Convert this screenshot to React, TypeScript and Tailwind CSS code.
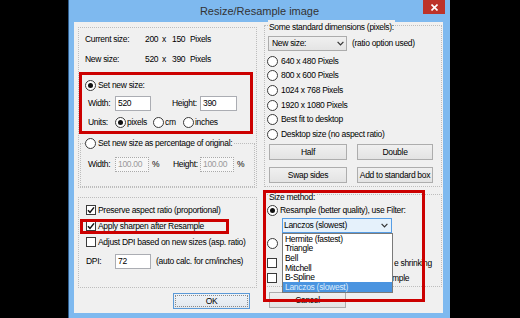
import React from "react";

function Radio({ checked = false }: { checked?: boolean }) {
  return (
    <span className="flex h-[11px] w-[11px] shrink-0 items-center justify-center rounded-full border border-[#3a3a3a] bg-white">
      {checked && <span className="h-[5px] w-[5px] rounded-full bg-[#111]" />}
    </span>
  );
}

function Check({ checked = false }: { checked?: boolean }) {
  return (
    <span className="flex h-[10px] w-[10px] shrink-0 items-center justify-center border border-[#3a3a3a] bg-white">
      {checked && (
        <svg width="8" height="8" viewBox="0 0 8 8">
          <path d="M1 4.2 L3 6.4 L7 1.4" stroke="#111" strokeWidth="1.5" fill="none" />
        </svg>
      )}
    </span>
  );
}

function Chevron() {
  return (
    <svg width="7" height="5" viewBox="0 0 7 5">
      <path d="M0.6 0.8 L3.5 3.8 L6.4 0.8" stroke="#333" strokeWidth="1.2" fill="none" />
    </svg>
  );
}

function Edit({ w, value, disabled = false }: { w: string; value: string; disabled?: boolean }) {
  return (
    <span
      className={
        disabled
          ? `${w} flex h-[15px] items-center border border-dotted border-[#a9a9a9] bg-[#f6f6f6] pl-[2px] text-[#9a9a9a]`
          : `${w} flex h-[15px] items-center border border-[#abadb3] bg-white pl-[2px]`
      }
    >
      {value}
    </span>
  );
}

function Button({ w, label, focused = false }: { w: string; label: string; focused?: boolean }) {
  return (
    <div
      className={
        focused
          ? `${w} flex h-[16px] items-center justify-center border border-[#5b9ad8] bg-gradient-to-b from-[#eef3f8] to-[#e3e8ee] p-[1px]`
          : `${w} flex h-[16px] items-center justify-center border border-[#adadad] bg-gradient-to-b from-[#f0f0f0] to-[#e3e3e3]`
      }
    >
      {focused ? (
        <span className="flex h-full w-full items-center justify-center border border-dotted border-[#8a8a8a]">{label}</span>
      ) : (
        label
      )}
    </div>
  );
}

const filters = ["Hermite (fastest)", "Triangle", "Bell", "Mitchell", "B-Spline", "Lanczos (slowest)"];

export default function App() {
  return (
    <div className="h-[318px] w-[520px] overflow-hidden bg-black font-['Liberation_Sans',Arial,sans-serif] text-[8.5px] leading-none tracking-[-0.3px] text-black">
      <div className="ml-[68px] flex h-[318px] w-[382px] flex-col border-l border-[#2f5c8c] bg-[#7eb9ef]">
        {/* title bar */}
        <div className="relative flex h-[22px] items-center justify-center">
          <span className="text-[11px] tracking-normal text-[#333]">Resize/Resample image</span>
          <div className="absolute right-[5px] top-0 flex h-[14px] w-[22px] items-center justify-center bg-[#bd3329]">
            <svg width="7" height="7" viewBox="0 0 7 7">
              <path d="M0.5 0.5 L6.5 6.5 M6.5 0.5 L0.5 6.5" stroke="#fff" strokeWidth="1.6" />
            </svg>
          </div>
        </div>

        {/* client */}
        <div className="relative ml-[5px] flex h-[291px] w-[369px] bg-[#f0f0f0]">
          {/* left column */}
          <div className="ml-[4px] flex w-[179px] flex-col">
            <div className="mt-[5px] flex h-[161px] flex-col border border-dotted border-[#bdbdbd]">
              <div className="mt-[4px] flex h-[14px] items-center pl-[6px]">
                <span className="w-[60px]">Current size:</span>
                <span className="w-[17px]">200</span>
                <span className="w-[10px]">x</span>
                <span className="w-[18px]">150</span>
                <span>Pixels</span>
              </div>
              <div className="mt-[6px] flex h-[14px] items-center pl-[6px]">
                <span className="w-[60px]">New size:</span>
                <span className="w-[17px]">520</span>
                <span className="w-[10px]">x</span>
                <span className="w-[18px]">390</span>
                <span>Pixels</span>
              </div>
              <div className="mt-[12px] flex h-[14px] items-center pl-[6px]">
                <Radio checked />
                <span className="ml-[2px]">Set new size:</span>
              </div>
              <div className="mt-[4px] flex h-[15px] items-center pl-[9px]">
                <span className="w-[27px]">Width:</span>
                <Edit w="w-[36px]" value="520" />
                <span className="ml-[21px] w-[28px]">Height:</span>
                <Edit w="w-[37px]" value="390" />
              </div>
              <div className="mt-[4px] flex h-[14px] items-center pl-[9px]">
                <span className="w-[27px]">Units:</span>
                <span className="flex w-[38px] items-center">
                  <Radio checked />
                  <span className="ml-[1px]">pixels</span>
                </span>
                <span className="flex w-[30px] items-center">
                  <Radio />
                  <span className="ml-[1px]">cm</span>
                </span>
                <span className="flex items-center">
                  <Radio />
                  <span className="ml-[1px]">inches</span>
                </span>
              </div>
              <div className="mx-[1px] mt-[14px] flex h-[44px] flex-col border border-dotted border-[#bdbdbd]">
                <div className="-mt-[8px] ml-[4px] flex h-[14px] items-center self-start bg-[#f0f0f0] pr-[2px]">
                  <Radio />
                  <span className="ml-[2px]">Set new size as percentage of original:</span>
                </div>
                <div className="mt-[7px] flex h-[15px] items-center pl-[7px]">
                  <span className="w-[27px]">Width:</span>
                  <Edit w="w-[34px]" value="100.00" disabled />
                  <span className="ml-[3px] w-[21px]">%</span>
                  <span className="w-[27px]">Height:</span>
                  <Edit w="w-[34px]" value="100.00" disabled />
                  <span className="ml-[3px]">%</span>
                </div>
              </div>
            </div>

            <div className="mt-[9px] flex h-[91px] flex-col border border-dotted border-[#bdbdbd]">
              <div className="mt-[5px] flex h-[14px] items-center pl-[7px]">
                <Check checked />
                <span className="ml-[2px]">Preserve aspect ratio (proportional)</span>
              </div>
              <div className="mt-[2px] flex h-[14px] items-center pl-[7px]">
                <Check checked />
                <span className="ml-[2px]">Apply sharpen after Resample</span>
              </div>
              <div className="mt-[2px] flex h-[14px] items-center pl-[7px]">
                <Check />
                <span className="ml-[2px]">Adjust DPI based on new sizes (asp. ratio)</span>
              </div>
              <div className="mt-[5px] flex h-[15px] items-center pl-[7px]">
                <span className="w-[29px]">DPI:</span>
                <Edit w="w-[36px]" value="72" />
                <span className="ml-[5px]">(auto calc. for cm/inches)</span>
              </div>
            </div>

            <div className="ml-[95px] mt-[5px]">
              <Button w="w-[77px]" label="OK" focused />
            </div>
          </div>

          {/* right column */}
          <div className="ml-[7px] flex w-[178px] flex-col">
            <div className="mt-[3px] flex h-[162px] flex-col border border-dotted border-[#bdbdbd]">
              <div className="-mt-[6px] ml-[3px] flex h-[14px] items-center self-start bg-[#f0f0f0] px-[1px]">
                Some standard dimensions (pixels):
              </div>
              <div className="mt-[2px] flex h-[15px] items-center pl-[3px]">
                <span className="flex h-[15px] w-[79px] items-center justify-between border border-[#acacac] bg-gradient-to-b from-[#f0f0f0] to-[#e4e4e4] pl-[3px] pr-[2px]">
                  New size:
                  <Chevron />
                </span>
                <span className="ml-[5px]">(ratio option used)</span>
              </div>
              <div className="mt-[3px] flex flex-col pl-[2px]">
                {[
                  ["640 x 480 Pixels", "h-[14px]"],
                  ["800 x 600 Pixels", "h-[15px]"],
                  ["1024 x 768 Pixels", "h-[15px]"],
                  ["1920 x 1080 Pixels", "h-[14px]"],
                  ["Best fit to desktop", "h-[15px]"],
                  ["Desktop size (no aspect ratio)", "h-[15px]"],
                ].map(([label, h]) => (
                  <div key={label} className={`flex items-center ${h}`}>
                    <Radio />
                    <span className="ml-[3px]">{label}</span>
                  </div>
                ))}
              </div>
              <div className="ml-[4px] mt-[2px] flex">
                <Button w="w-[78px]" label="Half" />
                <div className="ml-[10px]">
                  <Button w="w-[76px]" label="Double" />
                </div>
              </div>
              <div className="ml-[4px] mt-[7px] flex">
                <Button w="w-[78px]" label="Swap sides" />
                <div className="ml-[10px]">
                  <Button w="w-[76px]" label="Add to standard box" />
                </div>
              </div>
            </div>

            <div className="mt-[7px] flex h-[93px] flex-col border border-dotted border-[#bdbdbd]">
              <div className="-mt-[5px] ml-[3px] flex h-[14px] items-center self-start bg-[#f0f0f0] px-[1px]">
                Size method:
              </div>
              <div className="-mt-[1px] flex h-[14px] items-center pl-[2px]">
                <Radio checked />
                <span className="ml-[2px]">Resample (better quality), use Filter:</span>
              </div>
              <div className="ml-[17px] mt-[1px] flex h-[15px] w-[110px] items-center justify-between border border-[#569de5] bg-[#e5f1fb] pl-[1px] pr-[3px]">
                Lanczos (slowest)
                <Chevron />
              </div>
              {/* rows below are mostly covered by the open list */}
              <div className="mt-[3px] flex h-[14px] items-center pl-[2px]">
                <Radio />
              </div>
              <div className="mt-[6px] flex h-[14px] items-center whitespace-nowrap pl-[2px]">
                <Check />
                <span className="ml-[3px] w-[114px] shrink-0" />
                <span>e shrinking</span>
              </div>
              <div className="mt-[1px] flex h-[14px] items-center whitespace-nowrap pl-[2px]">
                <Check />
                <span className="ml-[3px] w-[112px] shrink-0" />
                <span>mple</span>
              </div>
            </div>

            <div className="ml-[5px] mt-[5px]">
              <Button w="w-[77px]" label="Cancel" />
            </div>
          </div>

          {/* open filter list */}
          <div className="absolute left-[208px] top-[211px] flex h-[60px] w-[111px] flex-col border border-[#7a7a7a] bg-white">
            {filters.map((f, i) => (
              <div
                key={f}
                className={
                  i === filters.length - 1
                    ? "flex flex-1 items-center bg-[#4a94e0] pl-[2px] text-[#dcebfb]"
                    : "flex flex-1 items-center pl-[2px]"
                }
              >
                {f}
              </div>
            ))}
          </div>

          {/* red annotation boxes */}
          <div className="pointer-events-none absolute left-[5px] top-[50px] h-[62px] w-[174px] border-[3px] border-[#cc0000]" />
          <div className="pointer-events-none absolute left-[6px] top-[197px] h-[15px] w-[149px] border-[3px] border-[#cc0000]" />
          <div className="pointer-events-none absolute left-[189px] top-[168px] h-[112px] w-[162px] border-[3px] border-[#cc0000]" />
        </div>
      </div>
    </div>
  );
}
